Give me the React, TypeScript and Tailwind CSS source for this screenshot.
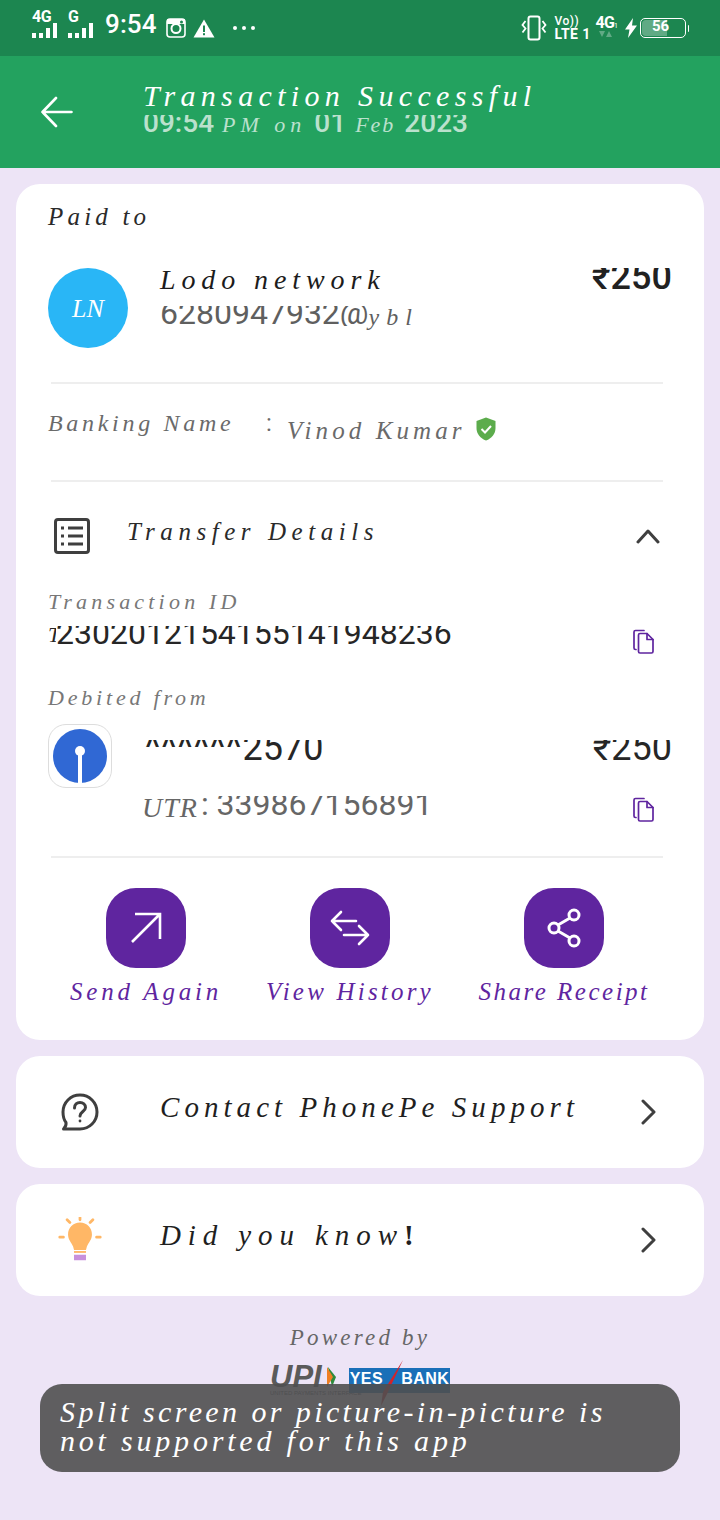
import React from "react";

const script = "font-['Liberation_Serif',serif] italic whitespace-nowrap";
const digit = "font-['Roboto',sans-serif] whitespace-nowrap";

function Bars({ cls }: { cls: string }) {
  const hs = ["h-[5px]", "h-[5px]", "h-[10px]", "h-[15px]"];
  return (
    <div className={"flex items-end gap-[3px] " + cls}>
      {hs.map((h, i) => (
        <div key={i} className={"w-[4px] bg-white " + h} />
      ))}
    </div>
  );
}

function Copy() {
  return (
    <svg width="24" height="26" viewBox="0 0 24 26" fill="none" stroke="#5f259f" strokeWidth="1.7" strokeLinejoin="round" strokeLinecap="round">
      <path d="M4 20.5 H3.5 a1.5 1.5 0 0 1 -1.5 -1.5 V3 a1.5 1.5 0 0 1 1.5 -1.5 H12" />
      <path d="M6.5 6 a1.5 1.5 0 0 1 1.5 -1.5 h7 l6 6 V22.5 a1.5 1.5 0 0 1 -1.5 1.5 H8 a1.5 1.5 0 0 1 -1.5 -1.5 Z" />
      <path d="M15 4.5 V10.5 H21" />
    </svg>
  );
}

function Chevron() {
  return (
    <svg width="16" height="26" viewBox="0 0 16 26" fill="none" stroke="#3f3f3f" strokeWidth="3" strokeLinecap="round" strokeLinejoin="round">
      <path d="M3 2 L14 13 L3 24" />
    </svg>
  );
}

export default function App() {
  return (
    <div className="relative w-[720px] h-[1520px] overflow-hidden bg-[#ede4f6]">
      {/* status bar */}
      <div className="h-14 bg-[#1c8650] flex items-center pl-8 pr-8 text-white font-['Roboto',sans-serif]">
        <div className="flex flex-col w-[28px] mt-[-7px]">
          <div className="h-[11px] leading-[11px] text-[16px] font-bold tracking-[-0.5px]">4G</div>
          <Bars cls="mt-[1px]" />
        </div>
        <div className="flex flex-col w-[28px] ml-2 mt-[-7px]">
          <div className="h-[11px] leading-[11px] text-[16px] font-bold">G</div>
          <Bars cls="mt-[1px]" />
        </div>
        <div className="ml-[9px] mt-[-9px] text-[26px] leading-[30px] font-medium tracking-[0.1px]">9:54</div>
        <svg className="ml-[9px] mt-[-1px]" width="20" height="20" viewBox="0 0 20 20" fill="none">
          <rect x="1" y="1" width="18" height="18" rx="3" stroke="white" strokeWidth="1.6" />
          <path d="M1 6 H19 V2 a1 1 0 0 0 -1 -1 H2 a1 1 0 0 0 -1 1 Z" fill="white" />
          <circle cx="10" cy="10.5" r="4.5" stroke="white" strokeWidth="2" />
          <circle cx="15.5" cy="4" r="1.5" fill="#1c8650" />
        </svg>
        <svg className="ml-[7px]" width="22" height="19" viewBox="0 0 22 19">
          <path d="M11 0.5 L21.5 18.5 H0.5 Z" fill="white" />
          <rect x="10" y="6.5" width="2" height="6.5" fill="#1c8650" />
          <rect x="10" y="14.2" width="2" height="2" fill="#1c8650" />
        </svg>
        <div className="ml-[18px] flex gap-[5px] mt-[-1px]">
          <div className="w-[4px] h-[4px] rounded-full bg-white" />
          <div className="w-[4px] h-[4px] rounded-full bg-white" />
          <div className="w-[4px] h-[4px] rounded-full bg-white" />
        </div>
        <div className="flex-1" />
        <svg width="26" height="26" viewBox="0 0 26 26" fill="none" stroke="white" strokeWidth="2">
          <rect x="7.5" y="1.5" width="11" height="23" rx="2" />
          <path d="M4.5 6 L1.5 10 L4.5 13.5 L1.5 17.5 M21.5 6 L24.5 10 L21.5 13.5 L24.5 17.5" strokeWidth="1.8" />
        </svg>
        <div className="ml-[8px] flex flex-col w-[36px] font-medium whitespace-nowrap">
          <div className="h-[13px] leading-[13px] text-[12px] tracking-[0.5px]">Vo))</div>
          <div className="h-[13px] leading-[13px] text-[14px] font-bold tracking-[0.4px]">LTE 1</div>
        </div>
        <div className="ml-[5px] flex flex-col items-start w-[24px] mt-[-4px]">
          <div className="h-[14px] leading-[14px] text-[16px] font-bold tracking-[-0.8px] whitespace-nowrap">4G<span className="text-[7px] font-normal">1</span></div>
          <div className="flex justify-center gap-[1px] ml-[3px] mt-[1px] opacity-30">
            <svg width="14" height="6" viewBox="0 0 14 6" fill="white"><path d="M0 0 H6 L3 6 Z M7 6 H13 L10 0 Z" /></svg>
          </div>
        </div>
        <svg className="ml-[5px]" width="12" height="20" viewBox="0 0 12 20" fill="white"><path d="M8 0 L0 11.5 H4.5 L3 20 L12 7.5 H7 Z" /></svg>
        <div className="ml-[3px] relative w-[46px] h-[20px] rounded-[5px] border border-white overflow-hidden">
          <div className="absolute left-[1px] top-[1px] bottom-[1px] w-[25px] rounded-l-[4px] bg-white/30" />
          <div className="relative text-center pr-[4px] text-[15px] leading-[14px] font-bold">56</div>
        </div>
        <div className="ml-[2px] w-[1.5px] h-[7px] bg-white rounded-r-sm mr-[-1px]" />
      </div>

      {/* header */}
      <div className="h-28 bg-[#23a25f] flex items-center pl-[41px]">
        <svg width="32" height="32" viewBox="0 0 32 32" fill="none" stroke="white" strokeWidth="2.6" strokeLinecap="round" strokeLinejoin="round">
          <path d="M1.5 16 H30.5 M15 2 L1.5 16 L15 30" />
        </svg>
        <div className="ml-[70px] mb-[4px] text-white">
          <div className={script + " h-[30px] leading-[28px] text-[30px] font-light tracking-[5.35px]"}>Transaction Successful</div>
          <div className="h-[26px] flex items-center text-white/70">
            <div className={digit + " text-[28px] leading-[22px] font-medium h-[20px] overflow-hidden"}><div className="mt-[-3px]">09:54</div></div>
            <span className={script + " text-[22px] mx-[8px] leading-[24px] tracking-[5px] font-light"}>PM on</span>
            <div className={digit + " text-[28px] leading-[22px] font-medium h-[20px] overflow-hidden"}><div className="mt-[-3px]">01</div></div>
            <span className={script + " text-[22px] mx-[9px] leading-[24px] tracking-[2px] font-light"}>Feb</span>
            <div className={digit + " text-[28px] leading-[22px] font-medium h-[20px] overflow-hidden"}><div className="mt-[-3px]">2023</div></div>
          </div>
        </div>
      </div>

      {/* main card */}
      <div className="mx-4 mt-4 h-[856px] bg-white rounded-3xl px-8 pt-[20px]">
        <div className={script + " h-[26px] leading-[26px] text-[#2a2a2a] text-[25px] tracking-[4.2px]"}>Paid to</div>
        <div className="mt-[38px] flex h-[80px]">
          <div className={script + " w-20 h-20 rounded-full bg-[#29b6f6] text-white text-[26px] font-light flex items-center justify-center"}>LN</div>
          <div className="ml-8 flex-1 mt-[-3px]">
            <div className="flex justify-between">
              <div className={script + " h-[30px] leading-[30px] text-[#1c1c1c] text-[28px] tracking-[5.9px]"}>Lodo network</div>
              <div className={digit + " h-[25px] mt-[3px] text-[#212121] text-[36px] leading-[32px] font-medium overflow-hidden"}><div className="mt-[-7px]">₹250</div></div>
            </div>
            <div className="mt-[11px] flex items-start text-[#5f5f5f]">
              <div className={digit + " h-[20px] text-[32px] leading-[30px] overflow-hidden"}><div className="mt-[-8px]">6280947932@</div></div>
              <span className={script + " mt-[-2px] text-[24px] leading-[26px] tracking-[7px] font-light"}>ybl</span>
            </div>
          </div>
        </div>
        <div className="mt-[34px] ml-[3px] mr-[9px] h-[2px] bg-[#eeeeee]" />
        <div className="mt-[25px] h-[46px] flex text-[#6a6a6a]">
          <div className={script + " w-[218px] text-[24px] leading-[28px] tracking-[3.7px] font-light"}>Banking Name</div>
          <div className="text-[24px] leading-[24px] font-['Roboto',sans-serif] w-[21px] mt-[2px]">:</div>
          <div className={script + " mt-[8px] w-[189px] text-[25px] leading-[28px] tracking-[4.1px] font-light"}>Vinod Kumar</div>
          <svg className="mt-[8px]" width="20" height="24" viewBox="0 0 20 24">
            <path d="M10 0.5 L19.5 4 V11 C19.5 17 15.5 21.5 10 23.5 C4.5 21.5 0.5 17 0.5 11 V4 Z" fill="#5cac4c" />
            <path d="M5.5 12 L9 15.5 L15 9" fill="none" stroke="white" strokeWidth="2" />
          </svg>
        </div>
        <div className="mt-[25px] ml-[3px] mr-[9px] h-[2px] bg-[#eeeeee]" />
        <div className="mt-[36px] h-[38px] flex ml-[6px] mr-[12px]">
          <svg width="36" height="36" viewBox="0 0 36 36" fill="none" stroke="#3f3f3f">
            <rect x="1.5" y="1.5" width="33" height="33" rx="2.5" strokeWidth="3" />
            <path d="M7 10 H10 M7 18 H10 M7 26 H10 M14 10 H29 M14 18 H29 M14 26 H29" strokeWidth="3" />
          </svg>
          <div className={script + " ml-[37px] mt-[-1px] text-[#2a2a2a] text-[25px] leading-[30px] tracking-[5.55px] font-light"}>Transfer Details</div>
          <div className="flex-1" />
          <svg className="mt-[10px]" width="24" height="16" viewBox="0 0 24 16" fill="none" stroke="#3f3f3f" strokeWidth="3" strokeLinecap="round" strokeLinejoin="round">
            <path d="M2 14 L12 3 L22 14" />
          </svg>
        </div>
        <div className={script + " mt-[32px] h-[28px] text-[#777777] text-[22px] leading-[28px] tracking-[4.2px] font-light"}>Transaction ID</div>
        <div className="mt-[10px] flex justify-between items-start pr-[16px]">
          <div className="flex items-start h-[20px] text-[#262626] overflow-hidden">
            <div className={script + " w-[8px] overflow-hidden text-[22px] leading-[30px] font-light"}><div className="mt-[-6px]">T</div></div>
            <div className={digit + " text-[32px] leading-[30px]"}><div className="mt-[-8px]">2302012154155141948236</div></div>
          </div>
          <div className="mt-[3px]"><Copy /></div>
        </div>
        <div className={script + " mt-[28px] h-[30px] text-[#777777] text-[22px] leading-[30px] tracking-[3.8px] font-light"}>Debited from</div>
        <div className="mt-[11px] flex">
          <div className="w-16 h-16 rounded-[18px] border border-[#dddddd] flex items-center justify-center">
            <svg width="54" height="54" viewBox="0 0 54 54">
              <circle cx="27" cy="27" r="27" fill="#3068d4" />
              <circle cx="27" cy="22" r="5" fill="white" />
              <rect x="25" y="24" width="4" height="30" fill="white" />
            </svg>
          </div>
          <div className="ml-[33px] flex-1 mt-[16px]">
            <div className="flex justify-between">
              <div className={digit + " h-[20px] text-[#262626] text-[36px] leading-[30px] overflow-hidden"}><div className="mt-[-7px]"><span className="tracking-[1.2px]">^^^^^^</span>2570</div></div>
              <div className={digit + " h-[20px] text-[#262626] text-[36px] leading-[30px] overflow-hidden"}><div className="mt-[-7px]">₹250</div></div>
            </div>
            <div className="mt-[36px] flex justify-between items-start pr-[16px] ml-[-3px] text-[#666666]">
              <div className="flex items-start">
                <span className={script + " text-[28px] leading-[24px] mr-[3px] font-light tracking-[1px]"}>UTR</span>
                <div className={digit + " h-[20px] text-[32px] leading-[28px] overflow-hidden"}><div className="mt-[-6px]">: 339867156891</div></div>
              </div>
              <div className="mt-[1px]"><Copy /></div>
            </div>
          </div>
        </div>
        <div className="mt-[33px] ml-[3px] mr-[9px] h-[2px] bg-[#eeeeee]" />
        <div className="mt-[30px] grid grid-cols-[196px_212px_216px]">
          <div className="flex flex-col items-center">
            <div className="w-20 h-20 rounded-[30px] bg-[#5f259f] flex items-center justify-center">
              <svg width="34" height="34" viewBox="0 0 34 34" fill="none" stroke="white" strokeWidth="2.6"><path d="M3 31 L31 3 M6 3 H31 V28" /></svg>
            </div>
            <div className={script + " mt-[10px] text-[#5f259f] text-[25px] leading-[28px] font-medium tracking-[3.8px]"}>Send Again</div>
          </div>
          <div className="flex flex-col items-center">
            <div className="w-20 h-20 rounded-[30px] bg-[#5f259f] flex items-center justify-center">
              <svg width="40" height="36" viewBox="0 0 40 36" fill="none" stroke="white" strokeWidth="2.6" strokeLinecap="round" strokeLinejoin="round"><path d="M2 11 H26 M11 2 L2 11 L11 20 M14 25 H38 M29 16 L38 25 L29 34" /></svg>
            </div>
            <div className={script + " mt-[10px] text-[#5f259f] text-[25px] leading-[28px] font-medium tracking-[3.2px]"}>View History</div>
          </div>
          <div className="flex flex-col items-center">
            <div className="w-20 h-20 rounded-[30px] bg-[#5f259f] flex items-center justify-center">
              <svg width="34" height="40" viewBox="0 0 34 40" fill="none" stroke="white" strokeWidth="3"><circle cx="27" cy="7" r="5" /><circle cx="7" cy="20" r="5" /><circle cx="27" cy="33" r="5" /><path d="M11 17 L23 10 M11 23 L23 30" /></svg>
            </div>
            <div className={script + " mt-[10px] text-[#5f259f] text-[25px] leading-[28px] font-medium tracking-[2.5px]"}>Share Receipt</div>
          </div>
        </div>
      </div>

      {/* rows */}
      <div className="mx-4 mt-4 h-28 bg-white rounded-3xl flex items-center pl-[45px] pr-[48px]">
        <svg width="38" height="38" viewBox="0 0 38 38" fill="none" stroke="#3f3f3f" strokeWidth="3">
          <path d="M19 2 C28.5 2 36 9.5 36 19 C36 28.5 28.5 36 19 36 C14 36 6 36 2.5 36 C4 34.5 5.5 32 5 29.5 C3 27 2 23 2 19 C2 9.5 9.5 2 19 2 Z" strokeLinejoin="round" />
          <path d="M13.5 15 C13.5 11.5 16 9.5 19 9.5 C22 9.5 24.5 11.5 24.5 14.5 C24.5 18.5 19 18.5 19 23" strokeLinecap="round" />
          <circle cx="19" cy="28" r="1.4" fill="#3f3f3f" stroke="none" />
        </svg>
        <div className={script + " ml-[61px] mb-[10px] text-[#1f1f1f] text-[29px] leading-[34px] tracking-[5.05px]"}>Contact PhonePe Support</div>
        <div className="flex-1" />
        <Chevron />
      </div>
      <div className="mx-4 mt-4 h-28 bg-white rounded-3xl flex items-center pl-[42px] pr-[48px]">
        <svg width="44" height="46" viewBox="0 0 46 50">
          <path d="M23 6 C30.5 6 36 12 36 19 C36 24.5 32.5 27.5 30.5 32 L29.5 36 H16.5 L15.5 32 C13.5 27.5 10 24.5 10 19 C10 12 15.5 6 23 6 Z" fill="#ffb766" />
          <rect x="16.5" y="37" width="13" height="2" fill="#ffb766" />
          <rect x="16.5" y="41" width="13" height="6" fill="#c890dc" />
          <path d="M23 0.5 V3 M9 3 L12 6 M37 3 L34 6 M1 22 H5 M41 22 H45" stroke="#ffb766" strokeWidth="3" strokeLinecap="round" />
        </svg>
        <div className={script + " ml-[58px] mb-[10px] text-[#1f1f1f] text-[29px] leading-[34px] tracking-[6.9px]"}>Did you know<span className="font-bold not-italic">!</span></div>
        <div className="flex-1" />
        <Chevron />
      </div>

      <div className={script + " mt-[27px] h-[30px] text-center text-[#666666] text-[23px] leading-[30px] tracking-[3.2px] font-light"}>Powered by</div>
      <div className="mt-[12px] flex justify-center">
        <div className="flex flex-col items-start w-[72px]">
          <div className="flex items-center h-[24px]">
            <div className="font-['Liberation_Sans',sans-serif] italic font-bold text-[#5a5a5a] text-[31px] leading-[24px]">UPI</div>
            <svg className="ml-[4px] shrink-0" width="12" height="20" viewBox="0 0 10 20"><path d="M1 0 L9 10 L5 20 Z" fill="#2e8b3d" /><path d="M0 0 L6 10 L0 20 Z" fill="#ee7f25" /></svg>
          </div>
          <div className="font-['Liberation_Sans',sans-serif] text-[#555555] text-[6px] leading-[8px] whitespace-nowrap">UNITED PAYMENTS INTERFACE</div>
        </div>
        <div className="relative ml-[7px] w-[101px] h-[25px] mt-[3px] pb-[3px] bg-[#1a6fb8] flex items-center justify-center gap-[18px] font-['Liberation_Sans',sans-serif] font-bold text-white text-[16px] tracking-[0.5px]">
          <span>YES</span><span>BANK</span>
          <svg className="absolute left-[26px] top-[-8px]" width="30" height="48" viewBox="0 0 30 48"><path d="M28 0 L8 32 L6 46 L12 34 Z" fill="#d2232a" /></svg>
        </div>
      </div>

      {/* toast */}
      <div className="absolute left-10 top-[1384px] w-[640px] h-[88px] rounded-[22px] bg-[#4f4f50]/90 pl-[20px] pt-[10px] text-white">
        <div className={script + " h-[31px] text-[30px] leading-[36px] tracking-[3.4px] font-light"}>Split screen or picture-in-picture is</div>
        <div className={script + " h-[30px] text-[30px] leading-[32px] tracking-[3.8px] font-light"}>not supported for this app</div>
      </div>
    </div>
  );
}
